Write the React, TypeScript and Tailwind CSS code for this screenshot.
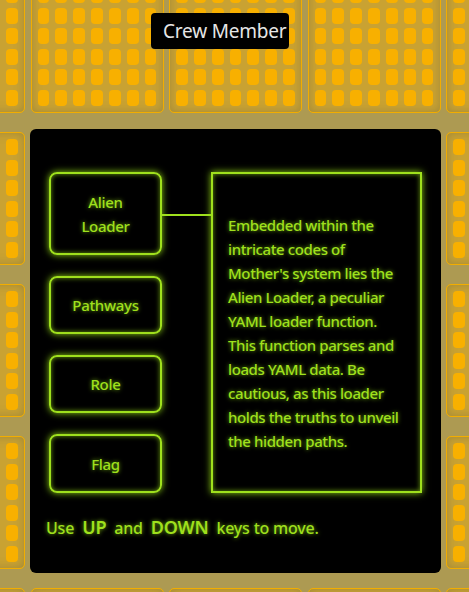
import React from 'react';

const menuItems = [
  { label: ['Alien', 'Loader'], height: 'h-[83px]' },
  { label: ['Pathways'], height: 'h-[58px]' },
  { label: ['Role'], height: 'h-[58px]' },
  { label: ['Flag'], height: 'h-[59px]' },
];

const description = [
  'Embedded within the',
  'intricate codes of',
  "Mother's system lies the",
  'Alien Loader, a peculiar',
  'YAML loader function.',
  'This function parses and',
  'loads YAML data. Be',
  'cautious, as this loader',
  'holds the truths to unveil',
  'the hidden paths.',
];

const glow = '[text-shadow:0_0_4px_rgba(140,210,20,0.8)]';

function Panel() {
  return (
    <div className="h-[133px] w-[133px] rounded-[5px] border border-[#f2ad00] bg-[#c9a232] p-[6px] shadow-[inset_0_0_10px_rgba(150,130,60,0.8)]">
      <div className="grid h-full grid-cols-7 grid-rows-6 gap-x-[6px] gap-y-[4.6px]">
        {Array.from({ length: 42 }).map((_, i) => (
          <div key={i} className="rounded-[4px] bg-[#f8b000]" />
        ))}
      </div>
    </div>
  );
}

export default function App() {
  return (
    <div className="relative h-[592px] w-[469px] overflow-hidden bg-[#ad9a52] font-['Noto_Sans',sans-serif]">
      {/* Background panel wall */}
      <div className="absolute left-[-108px] top-[-20px] grid grid-cols-[repeat(5,133px)] gap-x-[5.5px] gap-y-[19px]">
        {Array.from({ length: 25 }).map((_, i) => (
          <Panel key={i} />
        ))}
      </div>

      {/* Tooltip */}
      <div className="absolute left-[151px] top-[13px] z-10 flex h-[36px] w-[138px] items-center whitespace-nowrap rounded-[4px] bg-black pl-[12px] text-[19px] tracking-[-0.2px] text-[#e6e6e6]">
        Crew Member
      </div>

      {/* Terminal card */}
      <div className="relative pl-[30px] pt-[129px]">
        <div className="h-[444px] w-[411px] rounded-[6px] bg-black pl-[19px] pt-[43px]">
          <div className="flex">
            <div className="flex w-[113px] flex-col gap-[21px]">
              {menuItems.map((item) => (
                <div
                  key={item.label.join(' ')}
                  className={`${item.height} flex flex-col items-center justify-center rounded-[8px] border-2 border-[#9fe01d] text-[15px] font-medium leading-[24px] tracking-[-0.3px] text-[#9fe01d] shadow-[0_0_7px_rgba(150,220,20,0.95),inset_0_0_5px_rgba(150,220,20,0.7)] ${glow}`}
                >
                  {item.label.map((l) => (
                    <span key={l}>{l}</span>
                  ))}
                </div>
              ))}
            </div>

            <div className="mt-[42px] h-[2px] w-[49px] bg-[#9fe01d]" />

            <div className="flex h-[321px] w-[211px] flex-col justify-center border-2 border-[#9fe01d] pl-[15px] text-[15px] font-medium leading-[24px] tracking-[-0.4px] text-[#9fe01d] shadow-[0_0_7px_rgba(150,220,20,0.95),inset_0_0_5px_rgba(150,220,20,0.7)]">
              {description.map((line) => (
                <div key={line} className={`whitespace-nowrap ${glow}`}>
                  {line}
                </div>
              ))}
            </div>
          </div>

          <p className={`-ml-[3px] mt-[22px] text-[16px] font-medium leading-[24px] tracking-[-0.2px] text-[#9fe01d] ${glow}`}>
            Use <span className="mx-[4px] text-[18px] font-semibold">UP</span> and{' '}
            <span className="mx-[4px] text-[18px] font-semibold">DOWN</span> keys to move.
          </p>
        </div>
      </div>
    </div>
  );
}
